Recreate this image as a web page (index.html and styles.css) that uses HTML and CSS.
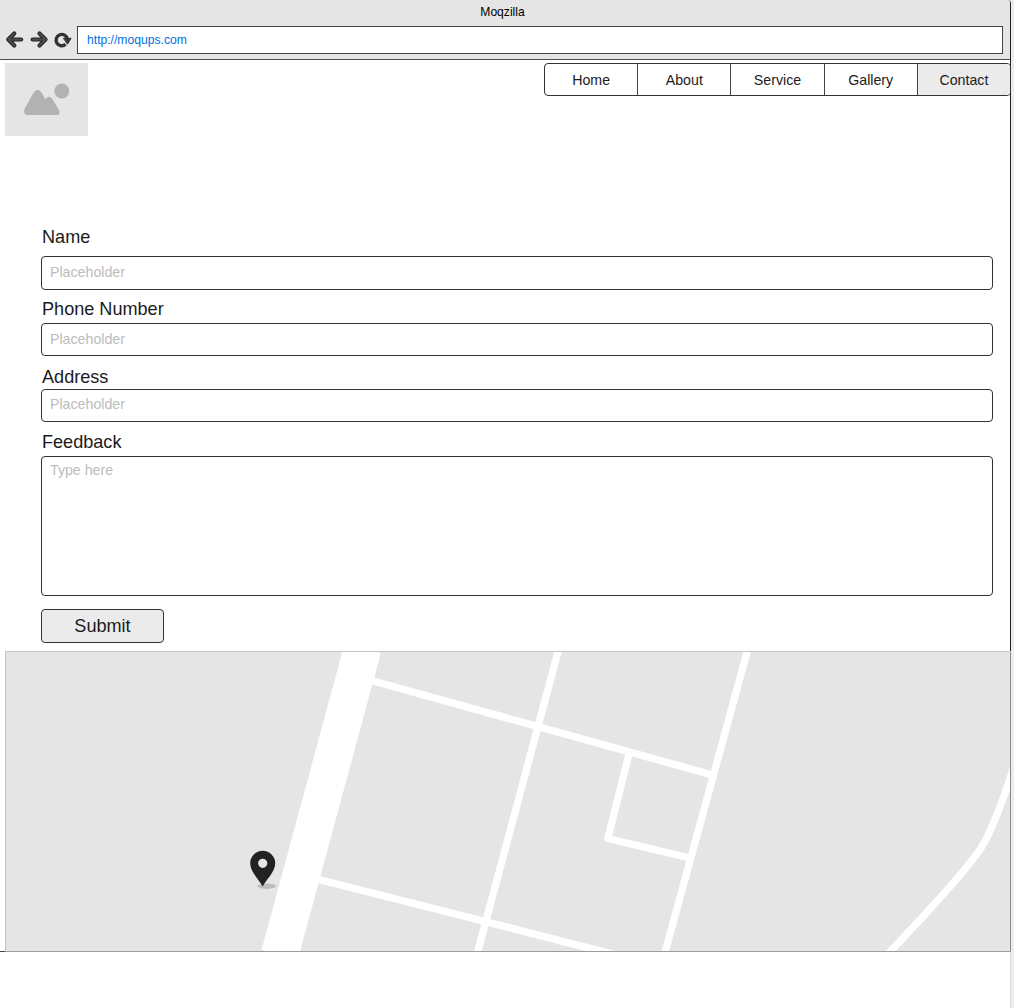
FILE: index.html
```html
<!DOCTYPE html>
<html lang="en">
<head>
<meta charset="utf-8">
<title>Moqzilla</title>
<link rel="stylesheet" href="styles.css">
</head>
<body>
<div class="window">
  <header class="chrome">
    <div class="chrome-title">Moqzilla</div>
    <div class="toolbar">
      <svg class="controls" width="77" height="28" viewBox="0 0 77 28" fill="none" stroke-linecap="round" stroke-linejoin="round">
        <g stroke="#262626" stroke-width="4.2">
          <path d="M14.300 7.500 8.300 13.500l6 6M8.800 13.500h12.400"/>
          <path d="M39.500 7.500l6 6-6 6M45 13.500H32.600"/>
        </g>
        <g stroke="#4c4c4c" stroke-width="2">
          <path d="M14.300 7.500 8.300 13.500l6 6M8.800 13.500h12.400"/>
          <path d="M39.500 7.500l6 6-6 6M45 13.500H32.600"/>
        </g>
        <path d="M65.600 18.300a5.700 5.700 0 1 1 1.800-5.200" stroke="#333" stroke-width="3.400" stroke-linecap="butt"/>
        <path d="M63.800 12.300h7.300l-3.400 5.600z" fill="#333" stroke="#333"/>
      </svg>
      <div class="address">http://moqups.com</div>
    </div>
  </header>
  <div class="page">
    <div class="topbar">
      <svg class="logo" width="83" height="73" viewBox="0 0 83 73">
        <rect width="83" height="73" fill="#e5e5e5"/>
        <g fill="#b2b2b2">
          <circle cx="56.800" cy="28" r="7.500"/>
          <path d="M19.700 45.500 28.500 29.800Q32.700 23.800 36.700 29.800L40.300 36.200Q44 31.200 47.600 36.200L54 47.200Q55.800 52 51.500 52H23Q17.300 51.500 19.700 45.500z"/>
        </g>
      </svg>
      <nav class="menu">
        <a class="menu-item">Home</a>
        <a class="menu-item">About</a>
        <a class="menu-item">Service</a>
        <a class="menu-item">Gallery</a>
        <a class="menu-item active">Contact</a>
      </nav>
    </div>
    <form class="form">
      <label class="label name" for="name">Name</label>
      <input class="field" id="name" placeholder="Placeholder">
      <label class="label phone" for="phone">Phone Number</label>
      <input class="field" id="phone" placeholder="Placeholder">
      <label class="label street" for="street">Address</label>
      <input class="field" id="street" placeholder="Placeholder">
      <label class="label feedback" for="feedback">Feedback</label>
      <textarea class="field area" id="feedback" placeholder="Type here"></textarea>
      <button class="submit" type="button">Submit</button>
    </form>
    <svg class="map" width="1006" height="301" viewBox="5 651 1006 301">
      <rect x="5" y="651" width="1006" height="301" fill="#e5e5e5"/>
      <g fill="none" stroke="#fff" stroke-width="7.3">
        <path d="M362.800 648 279.600 955" stroke-width="37.500"/>
        <path d="M365 678.700 711.500 774.700M310 877.300 487 922 620 956"/>
        <path d="M559 648 538 726.500 485.500 922.500 476.500 956M748.200 648 664 956"/>
        <path d="M629.500 752 607.800 838.500 690 858" stroke-linejoin="round"/>
        <path d="M1014 766C1004 798 992 830 981 848C966 871 925 915 887 955"/>
      </g>
      <ellipse cx="266.700" cy="886.200" rx="9.300" ry="2.700" fill="#bdbdbd"/>
      <path fill="#222" fill-rule="evenodd" d="M262.700 886.500C259 879.500 250.200 872 250.200 863.300a12.500 12.500 0 0 1 25 0C275.200 872 266.400 879.500 262.700 886.500zM262.700 858.700a4.600 4.600 0 1 0 0 9.200a4.600 4.600 0 1 0 0-9.200z"/>
      <path d="M5.500 951V651.500H1010" fill="none" stroke="#c4c4c4"/>
      <path d="M5 951.500H1011" stroke="#9c9c9c"/>
      <path d="M1010.500 652V951" stroke="#888"/>
    </svg>
  </div>
</div>
</body>
</html>
```
FILE: styles.css
```css
* { box-sizing: border-box; }

body {
  margin: 0;
  height: 1008px;
  overflow: hidden;
  background: linear-gradient(to right, #fff 1010px, #d9d9d9 1010px, #d9d9d9 1011px, #ededed 1011px);
  font-family: "Liberation Sans", Arial, sans-serif;
  color: #1b1b1b;
}

.window {
  width: 1011px;
  height: 952px;
  border-right: 1px solid #222;
  border-bottom: 1px solid #444;
  border-top-right-radius: 4px;
  background: #fff;
}

.chrome {
  height: 60px;
  background: #e5e5e5;
  border-bottom: 1px solid #4d4d4d;
  border-top-right-radius: 3px;
}

.chrome-title {
  height: 26px;
  padding-right: 5px;
  line-height: 24px;
  font-size: 12.1px;
  text-align: center;
  color: #000;
}

.toolbar { display: flex; }

.controls { flex: none; }

.address {
  width: 926px;
  height: 28px;
  padding-left: 9px;
  border: 1px solid #444;
  background: #fff;
  line-height: 26px;
  font-size: 12.15px;
  color: #0070e0;
}

.page { padding: 3px 0 0 5px; }

.topbar {
  display: flex;
  align-items: flex-start;
  justify-content: space-between;
  margin-right: -1px;
}

.logo { display: block; }

.menu {
  display: flex;
  width: 467px;
  height: 33px;
  border: 1px solid #333;
  border-radius: 4px;
  overflow: hidden;
}

.menu-item {
  flex: 1;
  line-height: 33px;
  font-size: 14.2px;
  text-align: center;
}

.menu-item + .menu-item { border-left: 1px solid #444; }

.active { background: #ebebeb; }

.form {
  display: flex;
  flex-direction: column;
  width: 988px;
  padding: 91px 0 0 36px;
}

.label {
  height: 20px;
  padding-left: 1px;
  line-height: 20px;
  font-size: 18.1px;
}

.name { margin-bottom: 9px; }
.phone { margin: 9px 0 4px; }
.street { margin: 11px 0 2px; }
.feedback { margin: 10px 0 4px; }

.field {
  width: 952px;
  height: 34px;
  margin: 0;
  padding: 0 8px 2px;
  border: 1px solid #333;
  border-radius: 4px;
  background: #fff;
  font: 14.2px "Liberation Sans", Arial, sans-serif;
}

#phone { height: 33px; }

#street {
  height: 33px;
  padding-bottom: 3px;
}

.field::placeholder { color: #bcbcbc; opacity: 1; }

.area {
  height: 140px;
  padding: 5px 8px;
  resize: none;
}

.submit {
  width: 123px;
  height: 34px;
  margin: 13px 0 8px;
  padding: 0;
  border: 1px solid #333;
  border-radius: 4px;
  background: #ebebeb;
  color: #1b1b1b;
  font: 18.1px "Liberation Sans", Arial, sans-serif;
}

.map { display: block; }
```
